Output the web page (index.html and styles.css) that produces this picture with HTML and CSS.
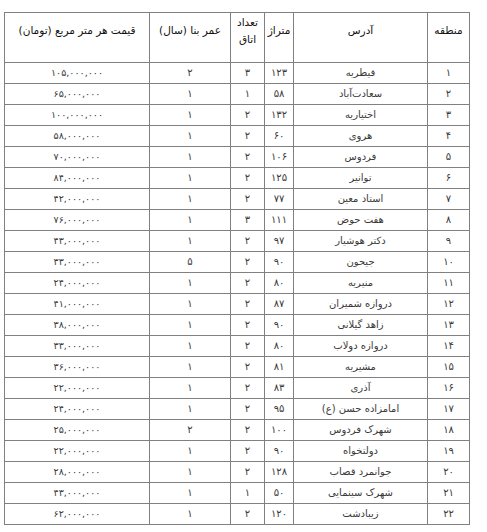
FILE: index.html
```html
<!DOCTYPE html>
<html lang="fa">
<head>
<meta charset="utf-8">
<link rel="stylesheet" href="styles.css">
</head>
<body>
<table class="data" dir="rtl">
<colgroup>
<col class="c-region"><col class="c-addr"><col class="c-area"><col class="c-rooms"><col class="c-age"><col class="c-price">
</colgroup>
<thead>
<tr><th>منطقه</th><th>آدرس</th><th>متراژ</th><th>تعداد اتاق</th><th>عمر بنا (سال)</th><th>قیمت هر متر مربع (تومان)</th></tr>
</thead>
<tbody>
<tr><td>۱</td><td>قیطریه</td><td>۱۲۳</td><td>۳</td><td>۲</td><td>۱۰۵,۰۰۰,۰۰۰</td></tr>
<tr><td>۲</td><td>سعادت‌آباد</td><td>۵۸</td><td>۱</td><td>۱</td><td>۶۵,۰۰۰,۰۰۰</td></tr>
<tr><td>۳</td><td>اختیاریه</td><td>۱۳۲</td><td>۲</td><td>۱</td><td>۱۰۰,۰۰۰,۰۰۰</td></tr>
<tr><td>۴</td><td>هروی</td><td>۶۰</td><td>۲</td><td>۱</td><td>۵۸,۰۰۰,۰۰۰</td></tr>
<tr><td>۵</td><td>فردوس</td><td>۱۰۶</td><td>۲</td><td>۱</td><td>۷۰,۰۰۰,۰۰۰</td></tr>
<tr><td>۶</td><td>توانیر</td><td>۱۲۵</td><td>۲</td><td>۱</td><td>۸۴,۰۰۰,۰۰۰</td></tr>
<tr><td>۷</td><td>استاد معین</td><td>۷۷</td><td>۲</td><td>۱</td><td>۴۲,۰۰۰,۰۰۰</td></tr>
<tr><td>۸</td><td>هفت حوض</td><td>۱۱۱</td><td>۳</td><td>۱</td><td>۷۶,۰۰۰,۰۰۰</td></tr>
<tr><td>۹</td><td>دکتر هوشیار</td><td>۹۷</td><td>۲</td><td>۱</td><td>۴۳,۰۰۰,۰۰۰</td></tr>
<tr><td>۱۰</td><td>جیحون</td><td>۹۰</td><td>۲</td><td>۵</td><td>۳۳,۰۰۰,۰۰۰</td></tr>
<tr><td>۱۱</td><td>منیریه</td><td>۸۰</td><td>۲</td><td>۱</td><td>۲۴,۰۰۰,۰۰۰</td></tr>
<tr><td>۱۲</td><td>دروازه شمیران</td><td>۸۷</td><td>۲</td><td>۱</td><td>۴۱,۰۰۰,۰۰۰</td></tr>
<tr><td>۱۳</td><td>زاهد گیلانی</td><td>۹۰</td><td>۲</td><td>۱</td><td>۳۸,۰۰۰,۰۰۰</td></tr>
<tr><td>۱۴</td><td>دروازه دولاب</td><td>۸۰</td><td>۲</td><td>۱</td><td>۳۳,۰۰۰,۰۰۰</td></tr>
<tr><td>۱۵</td><td>مشیریه</td><td>۸۱</td><td>۲</td><td>۱</td><td>۳۶,۰۰۰,۰۰۰</td></tr>
<tr><td>۱۶</td><td>آذری</td><td>۸۳</td><td>۲</td><td>۱</td><td>۲۲,۰۰۰,۰۰۰</td></tr>
<tr><td>۱۷</td><td>امامزاده حسن (ع)</td><td>۹۵</td><td>۲</td><td>۱</td><td>۲۴,۰۰۰,۰۰۰</td></tr>
<tr><td>۱۸</td><td>شهرک فردوس</td><td>۱۰۰</td><td>۲</td><td>۲</td><td>۲۵,۰۰۰,۰۰۰</td></tr>
<tr><td>۱۹</td><td>دولتخواه</td><td>۹۰</td><td>۲</td><td>۱</td><td>۲۲,۰۰۰,۰۰۰</td></tr>
<tr><td>۲۰</td><td>جوانمرد قصاب</td><td>۱۲۸</td><td>۲</td><td>۱</td><td>۲۸,۰۰۰,۰۰۰</td></tr>
<tr><td>۲۱</td><td>شهرک سینمایی</td><td>۵۰</td><td>۱</td><td>۱</td><td>۴۳,۰۰۰,۰۰۰</td></tr>
<tr><td>۲۲</td><td>زیبادشت</td><td>۱۲۰</td><td>۲</td><td>۱</td><td>۶۲,۰۰۰,۰۰۰</td></tr>
</tbody>
</table>
</body>
</html>
```

FILE: styles.css
```css
html, body {
  margin: 0;
  padding: 0;
  background: #ffffff;
}
body {
  padding: 12px 0 0 4px;
  font-family: "DejaVu Sans", sans-serif;
  font-size: 10px;
  color: #3a3a3a;
}
.data {
  width: 465px;
  border-collapse: collapse;
  table-layout: fixed;
  border: 1px solid #808080;
}
.c-region { width: 42px; }
.c-addr { width: 134px; }
.c-area { width: 29px; }
.c-rooms { width: 34px; }
.c-age { width: 81px; }
.c-price { width: 145px; }
.data th,
.data td {
  border: 1px solid #808080;
  text-align: center;
  vertical-align: middle;
  padding: 0 2px;
  line-height: 14px;
}
.data th {
  height: 35px;
  padding-bottom: 14px;
  font-weight: normal;
  color: #111111;
  font-size: 10.5px;
  line-height: 17px;
}
.data td {
  height: 20px;
}
.data td:last-child {
  font-size: 9.5px;
}
```
